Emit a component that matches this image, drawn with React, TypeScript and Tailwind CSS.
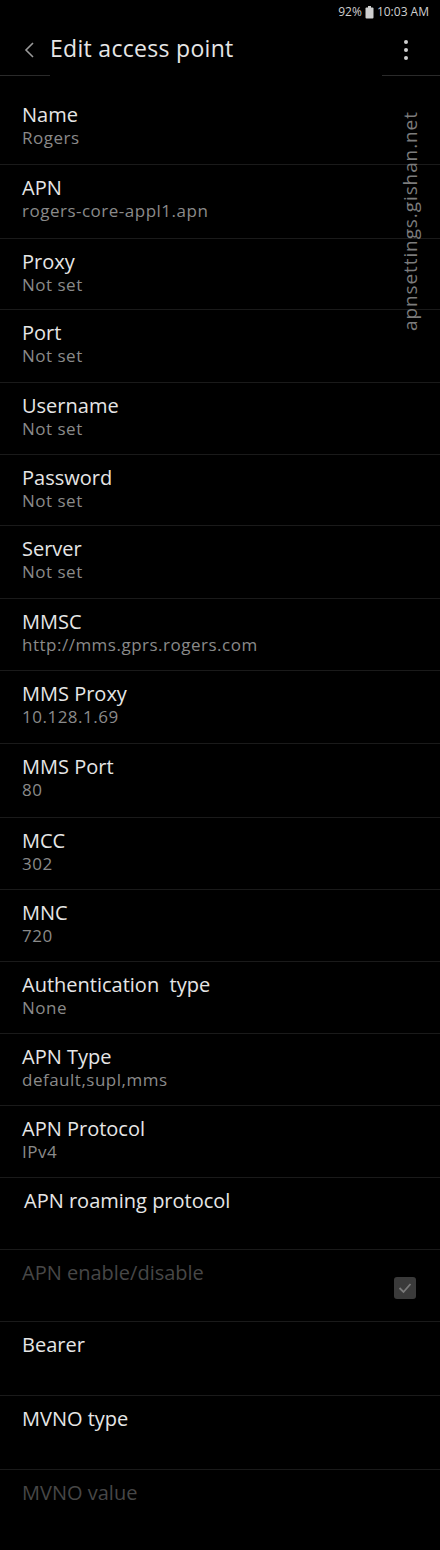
import React from 'react';

type Row = { title: string; value?: string; h: number; disabled?: boolean; check?: boolean; pl?: string };

const rows: Row[] = [
  { title: 'Name', value: 'Rogers', h: 88 },
  { title: 'APN', value: 'rogers-core-appl1.apn', h: 74 },
  { title: 'Proxy', value: 'Not set', h: 71 },
  { title: 'Port', value: 'Not set', h: 73 },
  { title: 'Username', value: 'Not set', h: 72 },
  { title: 'Password', value: 'Not set', h: 71 },
  { title: 'Server', value: 'Not set', h: 73 },
  { title: 'MMSC', value: 'http://mms.gprs.rogers.com', h: 72 },
  { title: 'MMS Proxy', value: '10.128.1.69', h: 73 },
  { title: 'MMS Port', value: '80', h: 74 },
  { title: 'MCC', value: '302', h: 72 },
  { title: 'MNC', value: '720', h: 72 },
  { title: 'Authentication\u00a0 type', value: 'None', h: 72 },
  { title: 'APN Type', value: 'default,supl,mms', h: 72 },
  { title: 'APN Protocol', value: 'IPv4', h: 72 },
  { title: 'APN roaming protocol', h: 72, pl: 'pl-6' },
  { title: 'APN enable/disable', h: 72, disabled: true, check: true },
  { title: 'Bearer', h: 74 },
  { title: 'MVNO type', h: 74 },
  { title: 'MVNO value', h: 82, disabled: true },
];

export default function App() {
  return (
    <div className="relative w-[440px] h-[1550px] bg-black overflow-hidden" style={{ fontFamily: '"Open Sans", Roboto, sans-serif' }}>
      {/* status bar */}
      <div className="h-6 flex items-center justify-end pr-[11px] gap-[3px] text-[12px] text-[#cfcfcf]">
        <span>92%</span>
        <svg width="9" height="13" viewBox="0 0 9 13">
          <rect x="3" y="0" width="3" height="2" fill="#cfcfcf" />
          <rect x="0.5" y="1.5" width="8" height="11" rx="1" fill="#cfcfcf" />
        </svg>
        <span>10:03 AM</span>
      </div>

      {/* app bar */}
      <div className="h-[51px] flex items-center">
        <svg className="ml-[23px]" width="12" height="18" viewBox="0 0 12 18">
          <path d="M10 2 L3 9 L10 16" stroke="#9a9a9a" strokeWidth="1.6" fill="none" />
        </svg>
        <span className="ml-[15px] text-[23px] tracking-[0.3px] font-medium text-[#e6e6e6] leading-none -mt-[2px]">Edit access point</span>
        <div className="ml-auto mr-[32px] flex flex-col gap-[4px]">
          <span className="w-[4px] h-[4px] rounded-full bg-[#cfcfcf]" />
          <span className="w-[4px] h-[4px] rounded-full bg-[#cfcfcf]" />
          <span className="w-[4px] h-[4px] rounded-full bg-[#cfcfcf]" />
        </div>
      </div>
      <div className="flex h-px">
        <div className="w-[50px] bg-[#2a2a2a]" />
        <div className="flex-1" />
        <div className="w-[58px] bg-[#2a2a2a]" />
      </div>

      {rows.map((r, i) => (
        <div
          key={r.title}
          className={`flex ${i > 0 ? 'border-t border-[#1a1a1a]' : ''}`}
          style={{ height: r.h }}
        >
          <div className={`flex-1 ${r.pl ?? 'pl-[22px]'} ${i === 0 ? 'pt-[26px]' : 'pt-[10px]'}`}>
            <div className={`text-[20px] leading-[25px] font-medium ${r.disabled ? 'text-[#474747]' : 'text-[#e6e6e6]'}`}>{r.title}</div>
            {r.value && <div className="text-[17px] leading-[22px] tracking-[0.5px] font-medium text-[#8a8a8a]">{r.value}</div>}
          </div>
          {r.check && (
            <div className="pr-[24px] pt-[27px]">
              <div className="w-[22px] h-[22px] rounded-[3px] bg-[#3a3a3a] flex items-center justify-center">
                <svg width="14" height="12" viewBox="0 0 14 12">
                  <path d="M1.5 6 L5.5 10 L12.5 2" stroke="#7a7a7a" strokeWidth="1.8" fill="none" />
                </svg>
              </div>
            </div>
          )}
        </div>
      ))}

      {/* watermark */}
      <div className="absolute left-[399px] top-[331px] origin-top-left -rotate-90 text-[19px] leading-[22px] tracking-[0.9px] text-[#7c7c7c] whitespace-nowrap">
        apnsettings.gishan.net
      </div>
    </div>
  );
}
